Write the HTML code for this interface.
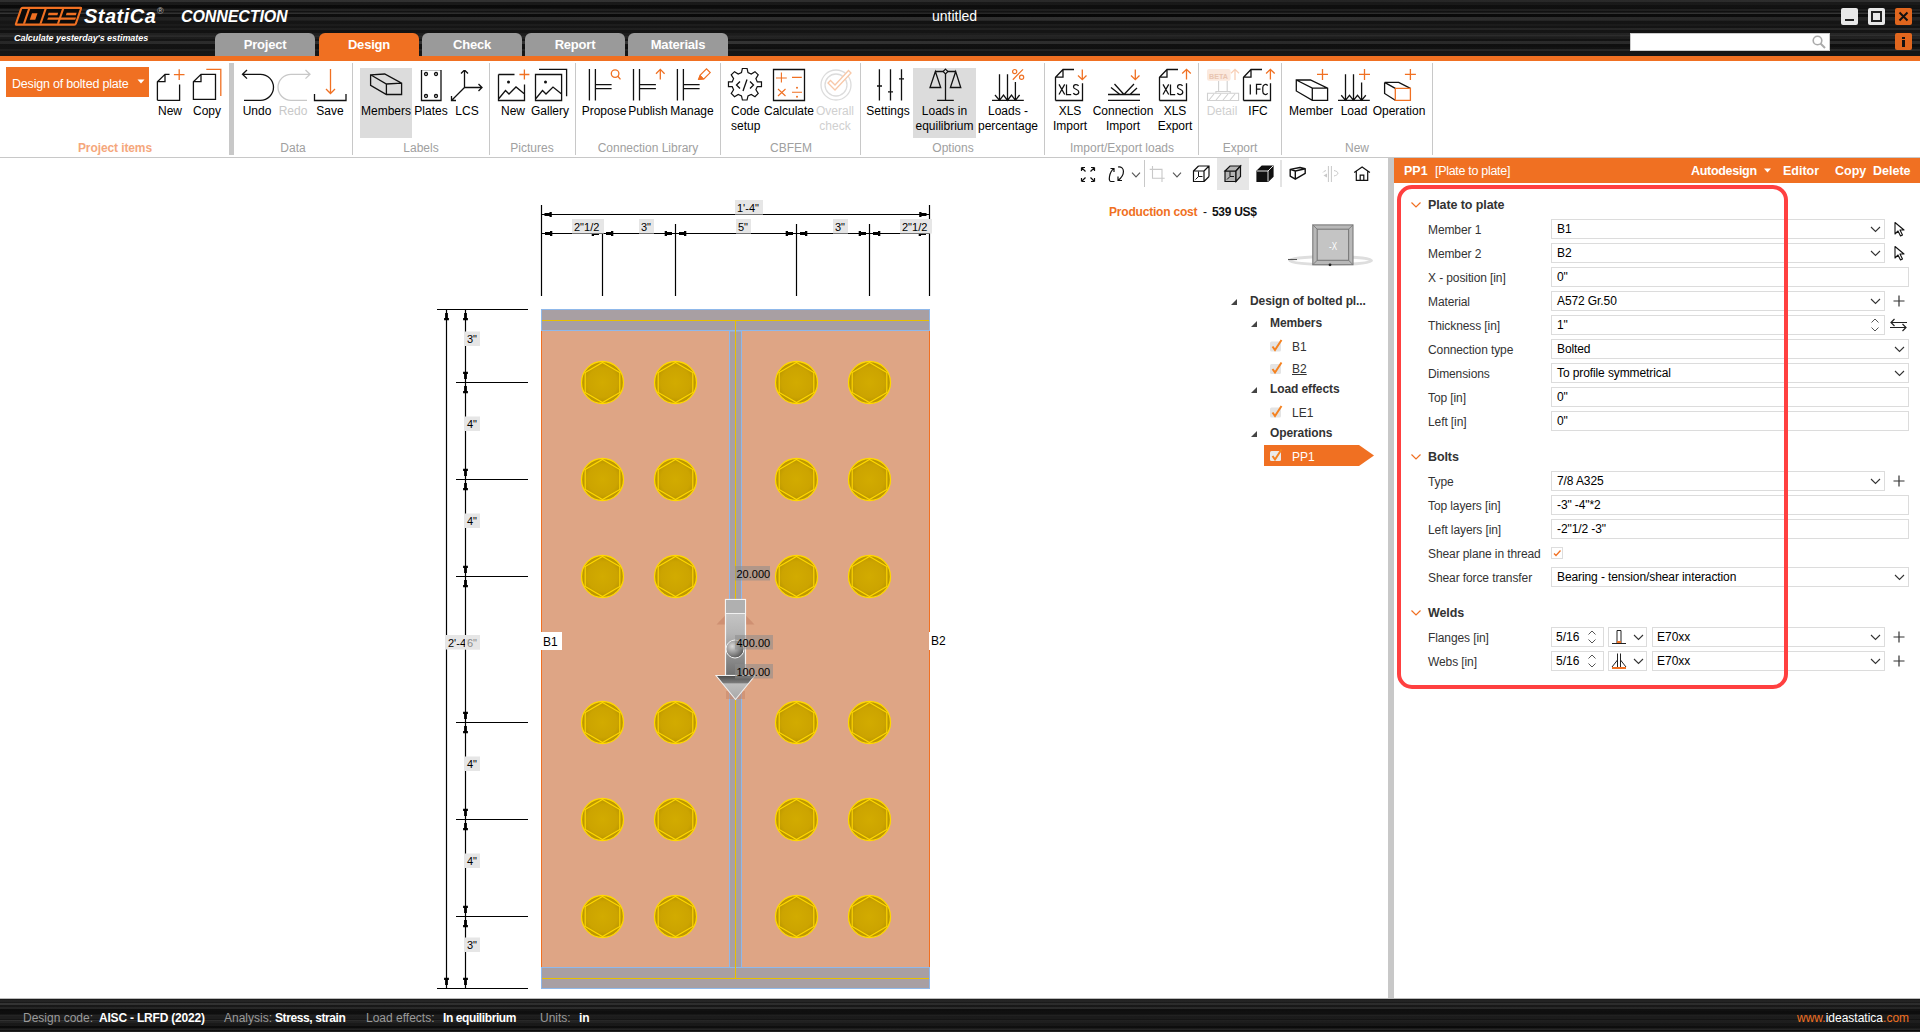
<!DOCTYPE html>
<html><head><meta charset="utf-8">
<style>
*{box-sizing:border-box;margin:0;padding:0}
html,body{width:1920px;height:1032px;overflow:hidden;background:#fff;font-family:"Liberation Sans",sans-serif;color:#000}
.a{position:absolute}
.tab{position:absolute;top:33px;height:23px;width:99px;border-radius:6px 6px 0 0;background:#9a9a9a;color:#fff;font-weight:bold;font-size:13px;text-align:center;line-height:24px;letter-spacing:-0.2px}
.tab.on{background:#f07022}
.rb{position:absolute;font-size:12px;color:#000;text-align:center;white-space:nowrap;line-height:15px}
.grp{position:absolute;top:141px;font-size:12px;color:#a0a0a0;text-align:center;white-space:nowrap}
.vs{position:absolute;top:63px;height:92px;width:1px;background:#c8c8c8}
</style></head><body>
<!-- HEADER -->
<div class="a" style="left:0;top:0;width:1920px;height:56px;overflow:hidden"><svg class="a" style="left:0;top:0" width="1920" height="56"><rect width="1920" height="56" fill="#171717"/><linearGradient id="h0"><stop offset="0.00" stop-opacity="0.58" stop-color="rgb(64,64,64)"/><stop offset="0.33" stop-opacity="0.65" stop-color="rgb(64,64,64)"/><stop offset="0.67" stop-opacity="0.31" stop-color="rgb(64,64,64)"/><stop offset="1.00" stop-opacity="0.59" stop-color="rgb(64,64,64)"/></linearGradient><rect y="0" width="1920" height="2" fill="url(#h0)"/><linearGradient id="h20"><stop offset="0.00" stop-opacity="0.53" stop-color="rgb(28,28,28)"/><stop offset="0.50" stop-opacity="0.27" stop-color="rgb(28,28,28)"/><stop offset="1.00" stop-opacity="0.61" stop-color="rgb(28,28,28)"/></linearGradient><rect y="2" width="1920" height="3" fill="url(#h20)"/><linearGradient id="h50"><stop offset="0.00" stop-opacity="0.98" stop-color="rgb(10,10,10)"/><stop offset="0.25" stop-opacity="0.97" stop-color="rgb(10,10,10)"/><stop offset="0.50" stop-opacity="0.71" stop-color="rgb(10,10,10)"/><stop offset="0.75" stop-opacity="0.67" stop-color="rgb(10,10,10)"/><stop offset="1.00" stop-opacity="0.28" stop-color="rgb(10,10,10)"/></linearGradient><rect y="5" width="1920" height="3" fill="url(#h50)"/><linearGradient id="h80"><stop offset="0.00" stop-opacity="0.18" stop-color="rgb(13,13,13)"/><stop offset="0.50" stop-opacity="0.90" stop-color="rgb(13,13,13)"/><stop offset="1.00" stop-opacity="0.66" stop-color="rgb(13,13,13)"/></linearGradient><rect y="8" width="1920" height="1" fill="url(#h80)"/><linearGradient id="h90"><stop offset="0.00" stop-opacity="0.65" stop-color="rgb(46,46,46)"/><stop offset="0.33" stop-opacity="0.32" stop-color="rgb(46,46,46)"/><stop offset="0.67" stop-opacity="0.35" stop-color="rgb(46,46,46)"/><stop offset="1.00" stop-opacity="0.40" stop-color="rgb(46,46,46)"/></linearGradient><rect y="9" width="1920" height="2" fill="url(#h90)"/><linearGradient id="h110"><stop offset="0.00" stop-opacity="0.71" stop-color="rgb(15,15,15)"/><stop offset="0.33" stop-opacity="0.50" stop-color="rgb(15,15,15)"/><stop offset="0.67" stop-opacity="0.62" stop-color="rgb(15,15,15)"/><stop offset="1.00" stop-opacity="0.94" stop-color="rgb(15,15,15)"/></linearGradient><rect y="11" width="1920" height="1" fill="url(#h110)"/><linearGradient id="h120"><stop offset="0.00" stop-opacity="0.79" stop-color="rgb(37,37,37)"/><stop offset="0.33" stop-opacity="0.59" stop-color="rgb(37,37,37)"/><stop offset="0.67" stop-opacity="0.18" stop-color="rgb(37,37,37)"/><stop offset="1.00" stop-opacity="0.63" stop-color="rgb(37,37,37)"/></linearGradient><rect y="12" width="1920" height="1" fill="url(#h120)"/><linearGradient id="h130"><stop offset="0.00" stop-opacity="0.87" stop-color="rgb(56,56,56)"/><stop offset="0.50" stop-opacity="0.48" stop-color="rgb(56,56,56)"/><stop offset="1.00" stop-opacity="0.96" stop-color="rgb(56,56,56)"/></linearGradient><rect y="13" width="1920" height="1" fill="url(#h130)"/><linearGradient id="h140"><stop offset="0.00" stop-opacity="0.33" stop-color="rgb(5,5,5)"/><stop offset="0.50" stop-opacity="0.92" stop-color="rgb(5,5,5)"/><stop offset="1.00" stop-opacity="0.55" stop-color="rgb(5,5,5)"/></linearGradient><rect y="14" width="1920" height="3" fill="url(#h140)"/><linearGradient id="h170"><stop offset="0.00" stop-opacity="0.21" stop-color="rgb(55,55,55)"/><stop offset="0.33" stop-opacity="0.69" stop-color="rgb(55,55,55)"/><stop offset="0.67" stop-opacity="0.81" stop-color="rgb(55,55,55)"/><stop offset="1.00" stop-opacity="0.38" stop-color="rgb(55,55,55)"/></linearGradient><rect y="17" width="1920" height="3" fill="url(#h170)"/><linearGradient id="h200"><stop offset="0.00" stop-opacity="0.16" stop-color="rgb(44,44,44)"/><stop offset="0.33" stop-opacity="0.50" stop-color="rgb(44,44,44)"/><stop offset="0.67" stop-opacity="0.93" stop-color="rgb(44,44,44)"/><stop offset="1.00" stop-opacity="0.26" stop-color="rgb(44,44,44)"/></linearGradient><rect y="20" width="1920" height="1" fill="url(#h200)"/><linearGradient id="h210"><stop offset="0.00" stop-opacity="0.20" stop-color="rgb(17,17,17)"/><stop offset="0.50" stop-opacity="0.83" stop-color="rgb(17,17,17)"/><stop offset="1.00" stop-opacity="0.30" stop-color="rgb(17,17,17)"/></linearGradient><rect y="21" width="1920" height="3" fill="url(#h210)"/><linearGradient id="h240"><stop offset="0.00" stop-opacity="0.58" stop-color="rgb(29,29,29)"/><stop offset="0.33" stop-opacity="0.99" stop-color="rgb(29,29,29)"/><stop offset="0.67" stop-opacity="0.80" stop-color="rgb(29,29,29)"/><stop offset="1.00" stop-opacity="0.51" stop-color="rgb(29,29,29)"/></linearGradient><rect y="24" width="1920" height="2" fill="url(#h240)"/><linearGradient id="h260"><stop offset="0.00" stop-opacity="0.51" stop-color="rgb(19,19,19)"/><stop offset="0.33" stop-opacity="0.33" stop-color="rgb(19,19,19)"/><stop offset="0.67" stop-opacity="0.38" stop-color="rgb(19,19,19)"/><stop offset="1.00" stop-opacity="0.98" stop-color="rgb(19,19,19)"/></linearGradient><rect y="26" width="1920" height="2" fill="url(#h260)"/><linearGradient id="h280"><stop offset="0.00" stop-opacity="0.33" stop-color="rgb(43,43,43)"/><stop offset="0.50" stop-opacity="0.49" stop-color="rgb(43,43,43)"/><stop offset="1.00" stop-opacity="0.88" stop-color="rgb(43,43,43)"/></linearGradient><rect y="28" width="1920" height="2" fill="url(#h280)"/><linearGradient id="h300"><stop offset="0.00" stop-opacity="0.99" stop-color="rgb(17,17,17)"/><stop offset="0.50" stop-opacity="0.33" stop-color="rgb(17,17,17)"/><stop offset="1.00" stop-opacity="0.37" stop-color="rgb(17,17,17)"/></linearGradient><rect y="30" width="1920" height="3" fill="url(#h300)"/><linearGradient id="h330"><stop offset="0.00" stop-opacity="0.48" stop-color="rgb(47,47,47)"/><stop offset="0.33" stop-opacity="0.21" stop-color="rgb(47,47,47)"/><stop offset="0.67" stop-opacity="0.33" stop-color="rgb(47,47,47)"/><stop offset="1.00" stop-opacity="0.69" stop-color="rgb(47,47,47)"/></linearGradient><rect y="33" width="1920" height="2" fill="url(#h330)"/><linearGradient id="h350"><stop offset="0.00" stop-opacity="0.68" stop-color="rgb(52,52,52)"/><stop offset="0.33" stop-opacity="0.26" stop-color="rgb(52,52,52)"/><stop offset="0.67" stop-opacity="0.65" stop-color="rgb(52,52,52)"/><stop offset="1.00" stop-opacity="0.86" stop-color="rgb(52,52,52)"/></linearGradient><rect y="35" width="1920" height="1" fill="url(#h350)"/><linearGradient id="h360"><stop offset="0.00" stop-opacity="0.68" stop-color="rgb(54,54,54)"/><stop offset="0.50" stop-opacity="0.41" stop-color="rgb(54,54,54)"/><stop offset="1.00" stop-opacity="0.34" stop-color="rgb(54,54,54)"/></linearGradient><rect y="36" width="1920" height="1" fill="url(#h360)"/><linearGradient id="h370"><stop offset="0.00" stop-opacity="0.31" stop-color="rgb(36,36,36)"/><stop offset="0.25" stop-opacity="0.78" stop-color="rgb(36,36,36)"/><stop offset="0.50" stop-opacity="0.95" stop-color="rgb(36,36,36)"/><stop offset="0.75" stop-opacity="0.32" stop-color="rgb(36,36,36)"/><stop offset="1.00" stop-opacity="0.96" stop-color="rgb(36,36,36)"/></linearGradient><rect y="37" width="1920" height="2" fill="url(#h370)"/><linearGradient id="h390"><stop offset="0.00" stop-opacity="0.19" stop-color="rgb(15,15,15)"/><stop offset="0.33" stop-opacity="0.24" stop-color="rgb(15,15,15)"/><stop offset="0.67" stop-opacity="0.59" stop-color="rgb(15,15,15)"/><stop offset="1.00" stop-opacity="0.37" stop-color="rgb(15,15,15)"/></linearGradient><rect y="39" width="1920" height="2" fill="url(#h390)"/><linearGradient id="h410"><stop offset="0.00" stop-opacity="0.51" stop-color="rgb(55,55,55)"/><stop offset="0.33" stop-opacity="0.92" stop-color="rgb(55,55,55)"/><stop offset="0.67" stop-opacity="0.57" stop-color="rgb(55,55,55)"/><stop offset="1.00" stop-opacity="0.59" stop-color="rgb(55,55,55)"/></linearGradient><rect y="41" width="1920" height="3" fill="url(#h410)"/><linearGradient id="h440"><stop offset="0.00" stop-opacity="0.34" stop-color="rgb(13,13,13)"/><stop offset="0.50" stop-opacity="0.63" stop-color="rgb(13,13,13)"/><stop offset="1.00" stop-opacity="0.87" stop-color="rgb(13,13,13)"/></linearGradient><rect y="44" width="1920" height="3" fill="url(#h440)"/><linearGradient id="h470"><stop offset="0.00" stop-opacity="0.33" stop-color="rgb(14,14,14)"/><stop offset="0.33" stop-opacity="0.93" stop-color="rgb(14,14,14)"/><stop offset="0.67" stop-opacity="0.79" stop-color="rgb(14,14,14)"/><stop offset="1.00" stop-opacity="0.21" stop-color="rgb(14,14,14)"/></linearGradient><rect y="47" width="1920" height="2" fill="url(#h470)"/><linearGradient id="h490"><stop offset="0.00" stop-opacity="0.20" stop-color="rgb(62,62,62)"/><stop offset="0.50" stop-opacity="0.30" stop-color="rgb(62,62,62)"/><stop offset="1.00" stop-opacity="0.46" stop-color="rgb(62,62,62)"/></linearGradient><rect y="49" width="1920" height="2" fill="url(#h490)"/><linearGradient id="h510"><stop offset="0.00" stop-opacity="0.46" stop-color="rgb(21,21,21)"/><stop offset="0.50" stop-opacity="0.91" stop-color="rgb(21,21,21)"/><stop offset="1.00" stop-opacity="0.98" stop-color="rgb(21,21,21)"/></linearGradient><rect y="51" width="1920" height="2" fill="url(#h510)"/><linearGradient id="h530"><stop offset="0.00" stop-opacity="0.18" stop-color="rgb(22,22,22)"/><stop offset="0.25" stop-opacity="0.17" stop-color="rgb(22,22,22)"/><stop offset="0.50" stop-opacity="0.92" stop-color="rgb(22,22,22)"/><stop offset="0.75" stop-opacity="0.75" stop-color="rgb(22,22,22)"/><stop offset="1.00" stop-opacity="0.97" stop-color="rgb(22,22,22)"/></linearGradient><rect y="53" width="1920" height="3" fill="url(#h530)"/></svg></div>
<div class="a" style="left:0;top:56px;width:1920px;height:5px;background:#f07022"></div>
<!-- logo -->
<svg class="a" style="left:12px;top:5px" width="75" height="23">
 <g transform="translate(2.2,20.8) skewX(-19)">
  <rect x="0" y="-19" width="62" height="19" rx="2" fill="#f07022"/>
  <rect x="2.2" y="-16.8" width="57.6" height="14.6" fill="#0a0a0a"/>
  <rect x="8" y="-17" width="2.2" height="15" fill="#f07022"/>
  <rect x="24.5" y="-17" width="2.2" height="15" fill="#f07022"/>
  <rect x="42" y="-17" width="2.2" height="15" fill="#f07022"/>
  <rect x="13.5" y="-12.5" width="5.5" height="6.5" fill="#f07022"/>
  <rect x="30" y="-13" width="9.5" height="2.4" fill="#f07022"/>
  <rect x="31" y="-8.2" width="28" height="2.2" fill="#f07022"/>
  <rect x="48" y="-13" width="10" height="2.4" fill="#f07022"/>
 </g>
</svg>
<div class="a" style="left:84px;top:4px;color:#fff;font-weight:bold;font-style:italic;font-size:20px;line-height:24px;letter-spacing:0.5px">StatiCa</div>
<div class="a" style="left:157px;top:6px;color:#bbb;font-size:9px">&reg;</div>
<div class="a" style="left:181px;top:7px;color:#fff;font-weight:bold;font-style:italic;font-size:16px;line-height:20px;letter-spacing:-0.1px">CONNECTION</div>
<div class="a" style="left:14px;top:33px;color:#fff;font-weight:bold;font-style:italic;font-size:9px;line-height:11px;letter-spacing:-0.05px">Calculate yesterday's estimates</div>
<div class="a" style="left:932px;top:8px;color:#fff;font-size:14px;line-height:17px">untitled</div>
<!-- window buttons -->
<div class="a" style="left:1841px;top:8px;width:17px;height:17px;background:#e8e8e8;border-radius:2px"></div>
<div class="a" style="left:1845px;top:19px;width:9px;height:2px;background:#222"></div>
<div class="a" style="left:1868px;top:8px;width:17px;height:17px;background:#e8e8e8;border-radius:2px"></div>
<div class="a" style="left:1871px;top:11px;width:11px;height:11px;border:2px solid #222"></div>
<div class="a" style="left:1895px;top:8px;width:17px;height:17px;background:#e0661e;border-radius:2px"></div>
<svg class="a" style="left:1895px;top:8px" width="17" height="17"><path d="M4.5 4.5L12.5 12.5M12.5 4.5L4.5 12.5" stroke="#111" stroke-width="2"/></svg>
<div class="a" style="left:1630px;top:33px;width:200px;height:18px;background:#fff;border:1px solid #ccc"></div>
<svg class="a" style="left:1811px;top:34px" width="16" height="16"><circle cx="6.5" cy="6.5" r="4.3" fill="none" stroke="#aaa" stroke-width="1.6"/><path d="M9.5 9.5L14 14" stroke="#aaa" stroke-width="2"/></svg>
<div class="a" style="left:1895px;top:33px;width:17px;height:17px;background:#e0661e;border-radius:2px"></div>
<div class="a" style="left:1902px;top:37px;width:3px;height:2px;background:#111"></div>
<div class="a" style="left:1902px;top:40px;width:3px;height:7px;background:#111"></div>
<!-- tabs -->
<div class="tab" style="left:215px;width:100px">Project</div>
<div class="tab on" style="left:319px;width:100px">Design</div>
<div class="tab" style="left:422px;width:100px">Check</div>
<div class="tab" style="left:525px;width:100px">Report</div>
<div class="tab" style="left:628px;width:100px">Materials</div>
<!-- RIBBON -->
<div class="a" style="left:0;top:157px;width:1920px;height:1px;background:#c8c8c8"></div>
<!-- ribbon: project items -->
<div class="a" style="left:6px;top:67px;width:143px;height:30px;background:#f07022"></div>
<div class="a" style="left:12px;top:76px;color:#fff;font-size:12.5px;line-height:16px;white-space:nowrap;letter-spacing:-0.2px">Design of bolted plate</div>
<svg class="a" style="left:137px;top:79px" width="8" height="5"><path d="M0.5 0.5H7.5L4 4.5Z" fill="#fff"/></svg>
<svg class="a" style="left:155px;top:68px" width="70" height="34" fill="none" stroke="#111" stroke-width="1.3">
 <path d="M2.4 32.3V13.7L10 6.3H14.5M2.4 13.7H10V6.3M24.6 16.4V32.3H2.4"/>
 <path d="M18.9 6.6H29.5M24.2 1.3V11.9" stroke="#f07022"/>
 <path d="M38.4 31.4V13.7L46 6.3H60.5V31.4ZM38.4 13.7H46V6.3"/>
 <path d="M51.3 1.3H65.8V27.9" stroke="#f07022"/>
</svg>
<div class="rb" style="left:150px;top:104px;width:40px">New</div>
<div class="rb" style="left:187px;top:104px;width:40px">Copy</div>
<div class="grp" style="left:60px;width:110px;color:#f5a77c;font-weight:bold;letter-spacing:-0.1px">Project items</div>
<div class="a" style="left:229px;top:63px;width:5px;height:92px;background:#c8c8c8"></div>
<!-- data -->
<svg class="a" style="left:240px;top:68px" width="120" height="36" fill="none" stroke="#111" stroke-width="1.3">
 <path d="M2.5 6.3H20.5A13 13 0 0 1 20.5 32.3H4M7 2L2.5 6.3L7 10.6"/>
 <path d="M70 6.3H51A13 13 0 0 0 51 32.3H67M65.5 2L70 6.3L65.5 10.6" stroke="#c8c8c8"/>
 <path d="M90.5 1V25.5M86 21L90.5 25.5L95 21" stroke="#f07022"/>
 <path d="M74.5 26V32.5H106V26"/>
</svg>
<div class="rb" style="left:237px;top:104px;width:40px">Undo</div>
<div class="rb" style="left:273px;top:104px;width:40px;color:#c8c8c8">Redo</div>
<div class="rb" style="left:310px;top:104px;width:40px">Save</div>
<div class="grp" style="left:253px;width:80px">Data</div>
<div class="vs" style="left:352px"></div>
<!-- labels -->
<div class="a" style="left:360px;top:68px;width:52px;height:70px;background:#dcdcdc"></div>
<svg class="a" style="left:368px;top:70px" width="130" height="36" fill="none" stroke="#111" stroke-width="1.3">
 <path d="M2.6 4.8L16.7 4L33.6 13.2V24.5H18.4L2.6 15.3ZM2.6 4.8L18.4 14L33.6 13.2M18.4 14V24.5"/>
 <path d="M53.5 -0.5H73V30.5H53.5Z"/><circle cx="58" cy="4" r="1.5"/><circle cx="68" cy="4" r="1.5"/><circle cx="58" cy="26" r="1.5"/><circle cx="68" cy="26" r="1.5"/>
 <path d="M96.5 0V17.5M93 3.5L96.5 0L100 3.5M96.5 17.5H114M110.5 14L114 17.5L110.5 21M96.5 17.5L83.5 30.5M83.5 26V30.5H88"/>
</svg>
<div class="rb" style="left:360px;top:104px;width:52px">Members</div>
<div class="rb" style="left:411px;top:104px;width:40px">Plates</div>
<div class="rb" style="left:447px;top:104px;width:40px">LCS</div>
<div class="grp" style="left:381px;width:80px">Labels</div>
<div class="vs" style="left:489px"></div>
<!-- pictures -->
<svg class="a" style="left:497px;top:68px" width="75" height="36" fill="none" stroke="#111" stroke-width="1.3">
 <path d="M1.5 6.5H17.5M27.5 16.4V32.5H1.5V6.5M1.5 31L8.5 22.5L12 26L19 19L27.5 26"/><circle cx="11.5" cy="14" r="1.5" fill="#111" stroke="none"/>
 <path d="M22.4 6.5H32.4M27.4 1.5V11.5" stroke="#f07022"/>
 <path d="M38.5 6.5H64.6V32.5H38.5ZM38.5 31L45.5 22.5L49 26L56 19L64.6 26M42 1.4H69.6V28.3"/><circle cx="48.5" cy="14" r="1.5" fill="#111" stroke="none"/>
</svg>
<div class="rb" style="left:493px;top:104px;width:40px">New</div>
<div class="rb" style="left:528px;top:104px;width:44px">Gallery</div>
<div class="grp" style="left:492px;width:80px">Pictures</div>
<div class="vs" style="left:575px"></div>
<!-- connection library -->
<svg class="a" style="left:586px;top:68px" width="130" height="36" fill="none" stroke="#111" stroke-width="1.3">
 <path d="M3.4 1V32.5M9.4 1V32.5M9.4 16.6H25.6M9.4 20.6H25.6"/>
 <circle cx="29.1" cy="5.6" r="3.8" stroke="#f07022"/><path d="M31.8 8.3L34.5 11.4" stroke="#f07022"/>
 <path d="M47.5 1V32.5M53.5 1V32.5M53.5 16.6H69.9M53.5 20.6H69.9"/>
 <path d="M74.3 1.4V11.6M70 5.7L74.3 1.4L78.6 5.7" stroke="#f07022"/>
 <path d="M91.4 1V32.5M97.4 1V32.5M97.4 16.6H113.6M97.4 20.6H113.6"/>
 <path d="M112.6 11.4L114.2 7.2L120.5 0.9L124.2 4.6L117.9 10.9Z" stroke="#f07022" stroke-width="1.2"/><path d="M112.6 11.4L114.2 7.2L117.9 10.9Z" fill="#f07022" stroke="#f07022" stroke-width="0.8"/>
</svg>
<div class="rb" style="left:579px;top:104px;width:50px">Propose</div>
<div class="rb" style="left:623px;top:104px;width:50px">Publish</div>
<div class="rb" style="left:667px;top:104px;width:50px">Manage</div>
<div class="grp" style="left:578px;width:140px">Connection Library</div>
<div class="vs" style="left:720px"></div>
<!-- cbfem -->
<svg class="a" style="left:727px;top:68px" width="130" height="36" fill="none" stroke="#111" stroke-width="1.3">
 <path d="M15.5 1.5H20.5L21.5 6L25 7.5L29 5L32.5 8.5L30 12.5L31.5 16H36V21H31.5L30 24.5L32.5 28.5L29 32L25 29.5L21.5 31L20.5 35.5H15.5L14.5 31L11 29.5L7 32L3.5 28.5L6 24.5L4.5 21H0.5V16H4.5L6 12.5L3.5 8.5L7 5L11 7.5L14.5 6Z" transform="translate(1,-1) scale(0.93)"/>
 <path d="M13 13.5L9.5 17L13 20.5M23 13.5L26.5 17L23 20.5M20 11.5L16 23"/>
 <path d="M46.5 1.5H77.5V32.5H46.5Z"/>
 <path d="M49 10H59.8M54.4 4.4V14.6M65 9.4H74.8M51 21L58.5 28M58.5 21L51 28M65 24.3H75" stroke="#f07022" stroke-width="1.1"/><circle cx="70" cy="19.8" r="1" fill="#f07022" stroke="none"/><circle cx="70" cy="28.8" r="1" fill="#f07022" stroke="none"/>
 <circle cx="109" cy="17" r="15" stroke="#dcdcdc" stroke-width="1.3"/><circle cx="109" cy="17" r="11" stroke="#dcdcdc"/>
 <path d="M101 15L108 22L124 5L121.5 2.5L108 17L103.5 12.5Z" stroke="#f8c8a8" fill="#fff"/>
</svg>
<div class="rb" style="left:731px;top:104px;width:40px;text-align:left">Code<br>setup</div>
<div class="rb" style="left:762px;top:104px;width:54px">Calculate</div>
<div class="rb" style="left:810px;top:104px;width:50px;color:#d0d0d0">Overall<br>check</div>
<div class="grp" style="left:751px;width:80px">CBFEM</div>
<div class="vs" style="left:860px"></div>
<!-- options -->
<div class="a" style="left:913px;top:68px;width:63px;height:70px;background:#dcdcdc"></div>
<svg class="a" style="left:874px;top:68px" width="155" height="36" fill="none" stroke="#111" stroke-width="1.3">
 <path d="M5.4 1.3V32.5M16.5 1.3V32.5M27.5 1.3V32.5M3 18H8M14 23.9H19M25 10.9H30"/>
 <path d="M71.5 3.5V32.3M61.4 3.5H81.7M61.4 3.5L56 19.5H66.7ZM81.7 3.5L76.4 19.5H86.75ZM63.1 32.3H79.8"/>
 <path d="M71.5 1.1L73.9 3.5L71.5 5.9L69.1 3.5Z" fill="#dcdcdc" stroke-width="1.1"/>
 <path d="M125.5 6.2V32.3M133.5 6.2V32.3M141.4 14.1V32.3M118 32.3H149.8M121 27L125.5 32.3L129.5 27L133.5 32.3L137.5 27L141.4 32.3L145.6 27" stroke-linejoin="miter"/>
 <circle cx="140.7" cy="3.6" r="2.1" stroke="#f07022" stroke-width="1.2"/><circle cx="147.6" cy="9.3" r="2.1" stroke="#f07022" stroke-width="1.2"/><path d="M149 1.3L138.8 11.75" stroke="#f07022" stroke-width="1.2"/>
</svg>
<div class="rb" style="left:863px;top:104px;width:50px">Settings</div>
<div class="rb" style="left:913px;top:104px;width:63px">Loads in<br>equilibrium</div>
<div class="rb" style="left:976px;top:104px;width:64px">Loads -<br>percentage</div>
<div class="grp" style="left:913px;width:80px">Options</div>
<div class="vs" style="left:1044px"></div>
<!-- import/export -->
<svg class="a" style="left:1053px;top:68px" width="145" height="36" fill="none" stroke="#111" stroke-width="1.3">
 <path d="M2.5 32.5V9.2L10 1.5H21M2.5 9.2H10V1.5M29.5 15.2V32.5H2.5"/>
 <path d="M6 16.4L11.7 26.5M11.7 16.4L6 26.5M13.5 16.4V26.5H18.2M25.5 18C24.8 16.2 20.5 15.8 20.5 18.9C20.5 21.6 25.8 21 25.8 24C25.8 27.2 21.2 27.2 20.4 25" stroke-width="1.25"/>
 <path d="M29.3 1.4V11.6M25 7.5L29.3 11.6L33.5 7.5" stroke="#f07022"/>
 <path d="M55 26.5H87M55 32.3H87M58 19.4L67 26.5M61.5 16L71 26.5M71 26.5L81 16M77 26.5L84 20"/>
 <path d="M82.3 1.4V11.6M78 7.5L82.3 11.6L86.5 7.5" stroke="#f07022"/>
 <path d="M106.5 32.5V9.2L114 1.5H125M106.5 9.2H114V1.5M133.5 15.2V32.5H106.5"/>
 <path d="M110 16.4L115.7 26.5M115.7 16.4L110 26.5M117.5 16.4V26.5H122.2M129.5 18C128.8 16.2 124.5 15.8 124.5 18.9C124.5 21.6 129.8 21 129.8 24C129.8 27.2 125.2 27.2 124.4 25" stroke-width="1.25"/>
 <path d="M133.5 11.6V1.4M129.2 5.5L133.5 1.4L137.8 5.5" stroke="#f07022"/>
</svg>
<div class="rb" style="left:1045px;top:104px;width:50px">XLS<br>Import</div>
<div class="rb" style="left:1091px;top:104px;width:64px">Connection<br>Import</div>
<div class="rb" style="left:1150px;top:104px;width:50px">XLS<br>Export</div>
<div class="grp" style="left:1062px;width:120px">Import/Export loads</div>
<div class="vs" style="left:1198px"></div>
<!-- export -->
<svg class="a" style="left:1205px;top:68px" width="75" height="36" fill="none" stroke="#111" stroke-width="1.3">
 <rect x="2" y="1" width="23.6" height="11.8" rx="2" fill="#fbe9de" stroke="none"/>
 <text x="4" y="10.5" font-family="Liberation Sans" font-weight="bold" font-size="7.5" fill="#e8c4b0" stroke="none" textLength="19" lengthAdjust="spacingAndGlyphs">BETA</text>
 <path d="M13.6 13V23.5M22.2 13V23.5M10.9 25.3V23.5H25.2V25.3M2.5 25.3H33.6V32.5H2.5ZM4 32L9 26M11 32L16 26M18 32L23 26M25 32L30 26" stroke="#d0d0d0" stroke-width="1.1"/>
 <path d="M30 12V1.4M26 5.3L30 1.4L34 5.3" stroke="#f8d0b8"/>
 <path d="M38.5 32.5V9.2L46 1.5H57M38.5 9.2H46V1.5M65.5 15.2V32.5H38.5"/>
 <path d="M45.3 16.4V26.5M51.5 26.5V16.4H56.5M51.5 21.2H55.5M62.6 17.6C61.5 15.8 57.8 16 57.8 19.5V23.4C57.8 27 61.5 27.2 62.6 25.3" stroke-width="1.25"/>
 <path d="M65.4 11.6V1.4M61.1 5.5L65.4 1.4L69.7 5.5" stroke="#f07022"/>
</svg>
<div class="rb" style="left:1202px;top:104px;width:40px;color:#d0d0d0">Detail</div>
<div class="rb" style="left:1238px;top:104px;width:40px">IFC</div>
<div class="grp" style="left:1200px;width:80px">Export</div>
<div class="vs" style="left:1281px"></div>
<!-- new -->
<svg class="a" style="left:1294px;top:68px" width="130" height="36" fill="none" stroke="#111" stroke-width="1.3">
 <path d="M2.3 12H16.4L33.6 20.2V32.3H18.3L2.3 23ZM2.3 12L18.3 20.2H33.6M18.3 20.2V32.3"/>
 <path d="M23 6.4H34M28.5 0.9V11.9" stroke="#f07022"/>
 <path d="M51.5 6.2V32.3M59.5 6.2V32.3M67.6 14.4V32.3M44 32.3H75.8M47.25 27.25L51.5 32.3L55.5 27.25L59.5 32.3L63.5 27.25L67.6 32.3L71.8 27.25" stroke-linejoin="miter"/>
 <path d="M65 6.4H76M70.5 0.9V11.9" stroke="#f07022"/>
 <path d="M90.6 14.4H104.7L116.4 20.4M90.6 14.4L101.3 20.4M90.6 14.4V25.5L101.3 32.3"/>
 <path d="M101.3 20.4H116.4V32.3H101.3Z" stroke="#f07022"/>
 <path d="M110.9 6.4H121.9M116.4 0.9V11.9" stroke="#f07022"/>
</svg>
<div class="rb" style="left:1286px;top:104px;width:50px">Member</div>
<div class="rb" style="left:1334px;top:104px;width:40px">Load</div>
<div class="rb" style="left:1371px;top:104px;width:56px">Operation</div>
<div class="grp" style="left:1317px;width:80px">New</div>
<div class="vs" style="left:1432px"></div>
<svg class="a" style="left:0;top:0" width="1388" height="998"><line x1="541.5" y1="205" x2="541.5" y2="296" stroke="#000" stroke-width="1.2"/><line x1="602.5" y1="224" x2="602.5" y2="296" stroke="#000" stroke-width="1.2"/><line x1="675.5" y1="224" x2="675.5" y2="296" stroke="#000" stroke-width="1.2"/><line x1="796.5" y1="224" x2="796.5" y2="296" stroke="#000" stroke-width="1.2"/><line x1="869.5" y1="224" x2="869.5" y2="296" stroke="#000" stroke-width="1.2"/><line x1="929.5" y1="205" x2="929.5" y2="296" stroke="#000" stroke-width="1.2"/><line x1="541.5" y1="214.5" x2="929.5" y2="214.5" stroke="#000" stroke-width="1.2"/><path d="M544.5 213.1 H549.5 V212.1 H551.8 V216.9 H549.5 V215.9 H544.5 Z" fill="#000"/><path d="M926.5 213.1 H921.5 V212.1 H919.2 V216.9 H921.5 V215.9 H926.5 Z" fill="#000"/><line x1="541.5" y1="233.5" x2="929.5" y2="233.5" stroke="#000" stroke-width="1.2"/><path d="M545.0 232.1 H550.0 V231.1 H552.3 V235.9 H550.0 V234.9 H545.0 Z" fill="#000"/><path d="M599.0 232.1 H594.0 V231.1 H591.7 V235.9 H594.0 V234.9 H599.0 Z" fill="#000"/><path d="M606.0 232.1 H611.0 V231.1 H613.3 V235.9 H611.0 V234.9 H606.0 Z" fill="#000"/><path d="M672.0 232.1 H667.0 V231.1 H664.7 V235.9 H667.0 V234.9 H672.0 Z" fill="#000"/><path d="M679.0 232.1 H684.0 V231.1 H686.3 V235.9 H684.0 V234.9 H679.0 Z" fill="#000"/><path d="M793.0 232.1 H788.0 V231.1 H785.7 V235.9 H788.0 V234.9 H793.0 Z" fill="#000"/><path d="M800.0 232.1 H805.0 V231.1 H807.3 V235.9 H805.0 V234.9 H800.0 Z" fill="#000"/><path d="M866.0 232.1 H861.0 V231.1 H858.7 V235.9 H861.0 V234.9 H866.0 Z" fill="#000"/><path d="M873.0 232.1 H878.0 V231.1 H880.3 V235.9 H878.0 V234.9 H873.0 Z" fill="#000"/><path d="M926.0 232.1 H921.0 V231.1 H918.7 V235.9 H921.0 V234.9 H926.0 Z" fill="#000"/><rect x="735" y="200.0" width="28" height="14.5" fill="#e6e6e6"/><text x="737" y="211.5" font-family="Liberation Sans" font-size="11" fill="#000">1'-4"</text><rect x="572" y="219.0" width="32" height="14.5" fill="#e6e6e6"/><text x="574" y="230.5" font-family="Liberation Sans" font-size="11" fill="#000">2"1/2</text><rect x="639" y="219.0" width="15" height="14.5" fill="#e6e6e6"/><text x="641" y="230.5" font-family="Liberation Sans" font-size="11" fill="#000">3"</text><rect x="736" y="219.0" width="15" height="14.5" fill="#e6e6e6"/><text x="738" y="230.5" font-family="Liberation Sans" font-size="11" fill="#000">5"</text><rect x="833" y="219.0" width="15" height="14.5" fill="#e6e6e6"/><text x="835" y="230.5" font-family="Liberation Sans" font-size="11" fill="#000">3"</text><rect x="900" y="219.0" width="32" height="14.5" fill="#e6e6e6"/><text x="902" y="230.5" font-family="Liberation Sans" font-size="11" fill="#000">2"1/2</text><line x1="437" y1="309.5" x2="528" y2="309.5" stroke="#000" stroke-width="1.2"/><line x1="456" y1="382.5" x2="528" y2="382.5" stroke="#000" stroke-width="1.2"/><line x1="456" y1="479.5" x2="528" y2="479.5" stroke="#000" stroke-width="1.2"/><line x1="456" y1="576.5" x2="528" y2="576.5" stroke="#000" stroke-width="1.2"/><line x1="456" y1="722.5" x2="528" y2="722.5" stroke="#000" stroke-width="1.2"/><line x1="456" y1="819.5" x2="528" y2="819.5" stroke="#000" stroke-width="1.2"/><line x1="456" y1="916.5" x2="528" y2="916.5" stroke="#000" stroke-width="1.2"/><line x1="437" y1="988.5" x2="528" y2="988.5" stroke="#000" stroke-width="1.2"/><line x1="446.5" y1="309.5" x2="446.5" y2="988.5" stroke="#000" stroke-width="1.2"/><path d="M445.1 313.0 V318.0 H444.1 V320.3 H448.9 V318.0 H447.9 V313.0 Z" fill="#000"/><path d="M445.1 985.0 V980.0 H444.1 V977.7 H448.9 V980.0 H447.9 V985.0 Z" fill="#000"/><line x1="465.5" y1="309.5" x2="465.5" y2="988.5" stroke="#000" stroke-width="1.2"/><path d="M464.1 313.0 V318.0 H463.1 V320.3 H467.9 V318.0 H466.9 V313.0 Z" fill="#000"/><path d="M464.1 379.0 V374.0 H463.1 V371.7 H467.9 V374.0 H466.9 V379.0 Z" fill="#000"/><path d="M464.1 386.0 V391.0 H463.1 V393.3 H467.9 V391.0 H466.9 V386.0 Z" fill="#000"/><path d="M464.1 476.0 V471.0 H463.1 V468.7 H467.9 V471.0 H466.9 V476.0 Z" fill="#000"/><path d="M464.1 483.0 V488.0 H463.1 V490.3 H467.9 V488.0 H466.9 V483.0 Z" fill="#000"/><path d="M464.1 573.0 V568.0 H463.1 V565.7 H467.9 V568.0 H466.9 V573.0 Z" fill="#000"/><path d="M464.1 580.0 V585.0 H463.1 V587.3 H467.9 V585.0 H466.9 V580.0 Z" fill="#000"/><path d="M464.1 719.0 V714.0 H463.1 V711.7 H467.9 V714.0 H466.9 V719.0 Z" fill="#000"/><path d="M464.1 726.0 V731.0 H463.1 V733.3 H467.9 V731.0 H466.9 V726.0 Z" fill="#000"/><path d="M464.1 816.0 V811.0 H463.1 V808.7 H467.9 V811.0 H466.9 V816.0 Z" fill="#000"/><path d="M464.1 823.0 V828.0 H463.1 V830.3 H467.9 V828.0 H466.9 V823.0 Z" fill="#000"/><path d="M464.1 913.0 V908.0 H463.1 V905.7 H467.9 V908.0 H466.9 V913.0 Z" fill="#000"/><path d="M464.1 920.0 V925.0 H463.1 V927.3 H467.9 V925.0 H466.9 V920.0 Z" fill="#000"/><path d="M464.1 985.0 V980.0 H463.1 V977.7 H467.9 V980.0 H466.9 V985.0 Z" fill="#000"/><rect x="465" y="331.5" width="15" height="14.5" fill="#e6e6e6"/><text x="467" y="343" font-family="Liberation Sans" font-size="11" fill="#000">3"</text><rect x="465" y="416.5" width="15" height="14.5" fill="#e6e6e6"/><text x="467" y="428" font-family="Liberation Sans" font-size="11" fill="#000">4"</text><rect x="465" y="513.5" width="15" height="14.5" fill="#e6e6e6"/><text x="467" y="525" font-family="Liberation Sans" font-size="11" fill="#000">4"</text><rect x="465" y="756.5" width="15" height="14.5" fill="#e6e6e6"/><text x="467" y="768" font-family="Liberation Sans" font-size="11" fill="#000">4"</text><rect x="465" y="853.5" width="15" height="14.5" fill="#e6e6e6"/><text x="467" y="865" font-family="Liberation Sans" font-size="11" fill="#000">4"</text><rect x="465" y="937.5" width="15" height="14.5" fill="#e6e6e6"/><text x="467" y="949" font-family="Liberation Sans" font-size="11" fill="#000">3"</text><rect x="446" y="635.0" width="34" height="14.5" fill="#e6e6e6"/><text x="448" y="646.5" font-family="Liberation Sans" font-size="11" fill="#000">2'-4"</text><rect x="465" y="635" width="15" height="14.5" fill="#e6e6e6" opacity="0.9"/><text x="467" y="646.5" font-family="Liberation Sans" font-size="11" fill="#888">6"</text><rect x="541" y="331" width="389" height="637" fill="#dea585"/><line x1="541.5" y1="331" x2="541.5" y2="968" stroke="#f07022" stroke-width="1"/><line x1="929.5" y1="331" x2="929.5" y2="968" stroke="#f07022" stroke-width="1"/><rect x="729.5" y="331" width="12" height="637" fill="#a89fa3" stroke="#8fb8ea" stroke-width="1"/><line x1="735.5" y1="320.5" x2="735.5" y2="978.5" stroke="#e8c000" stroke-width="1"/><rect x="541.5" y="309.5" width="388" height="21" fill="#a89fa3" stroke="#8fb8ea" stroke-width="1"/><line x1="542" y1="320.5" x2="929" y2="320.5" stroke="#e8c000" stroke-width="1.2"/><rect x="541.5" y="967.5" width="388" height="21" fill="#a89fa3" stroke="#8fb8ea" stroke-width="1"/><line x1="542" y1="978.5" x2="929" y2="978.5" stroke="#e8c000" stroke-width="1.2"/><line x1="735.5" y1="320.5" x2="735.5" y2="331" stroke="#e8c000" stroke-width="1"/><line x1="735.5" y1="967" x2="735.5" y2="978.5" stroke="#e8c000" stroke-width="1"/><defs><radialGradient id="bg" cx="50%" cy="50%" r="50%"><stop offset="0" stop-color="#d2ab00"/><stop offset="0.7" stop-color="#cca400"/><stop offset="1" stop-color="#b89400"/></radialGradient></defs><circle cx="602.5" cy="382.5" r="21" fill="url(#bg)" stroke="#ffd800" stroke-width="1.3"/><polygon points="602.5,362.5 619.8,372.5 619.8,392.5 602.5,402.5 585.2,392.5 585.2,372.5" fill="none" stroke="#ffd800" stroke-width="1.1"/><circle cx="675.5" cy="382.5" r="21" fill="url(#bg)" stroke="#ffd800" stroke-width="1.3"/><polygon points="675.5,362.5 692.8,372.5 692.8,392.5 675.5,402.5 658.2,392.5 658.2,372.5" fill="none" stroke="#ffd800" stroke-width="1.1"/><circle cx="796.5" cy="382.5" r="21" fill="url(#bg)" stroke="#ffd800" stroke-width="1.3"/><polygon points="796.5,362.5 813.8,372.5 813.8,392.5 796.5,402.5 779.2,392.5 779.2,372.5" fill="none" stroke="#ffd800" stroke-width="1.1"/><circle cx="869.5" cy="382.5" r="21" fill="url(#bg)" stroke="#ffd800" stroke-width="1.3"/><polygon points="869.5,362.5 886.8,372.5 886.8,392.5 869.5,402.5 852.2,392.5 852.2,372.5" fill="none" stroke="#ffd800" stroke-width="1.1"/><circle cx="602.5" cy="479.5" r="21" fill="url(#bg)" stroke="#ffd800" stroke-width="1.3"/><polygon points="602.5,459.5 619.8,469.5 619.8,489.5 602.5,499.5 585.2,489.5 585.2,469.5" fill="none" stroke="#ffd800" stroke-width="1.1"/><circle cx="675.5" cy="479.5" r="21" fill="url(#bg)" stroke="#ffd800" stroke-width="1.3"/><polygon points="675.5,459.5 692.8,469.5 692.8,489.5 675.5,499.5 658.2,489.5 658.2,469.5" fill="none" stroke="#ffd800" stroke-width="1.1"/><circle cx="796.5" cy="479.5" r="21" fill="url(#bg)" stroke="#ffd800" stroke-width="1.3"/><polygon points="796.5,459.5 813.8,469.5 813.8,489.5 796.5,499.5 779.2,489.5 779.2,469.5" fill="none" stroke="#ffd800" stroke-width="1.1"/><circle cx="869.5" cy="479.5" r="21" fill="url(#bg)" stroke="#ffd800" stroke-width="1.3"/><polygon points="869.5,459.5 886.8,469.5 886.8,489.5 869.5,499.5 852.2,489.5 852.2,469.5" fill="none" stroke="#ffd800" stroke-width="1.1"/><circle cx="602.5" cy="576.5" r="21" fill="url(#bg)" stroke="#ffd800" stroke-width="1.3"/><polygon points="602.5,556.5 619.8,566.5 619.8,586.5 602.5,596.5 585.2,586.5 585.2,566.5" fill="none" stroke="#ffd800" stroke-width="1.1"/><circle cx="675.5" cy="576.5" r="21" fill="url(#bg)" stroke="#ffd800" stroke-width="1.3"/><polygon points="675.5,556.5 692.8,566.5 692.8,586.5 675.5,596.5 658.2,586.5 658.2,566.5" fill="none" stroke="#ffd800" stroke-width="1.1"/><circle cx="796.5" cy="576.5" r="21" fill="url(#bg)" stroke="#ffd800" stroke-width="1.3"/><polygon points="796.5,556.5 813.8,566.5 813.8,586.5 796.5,596.5 779.2,586.5 779.2,566.5" fill="none" stroke="#ffd800" stroke-width="1.1"/><circle cx="869.5" cy="576.5" r="21" fill="url(#bg)" stroke="#ffd800" stroke-width="1.3"/><polygon points="869.5,556.5 886.8,566.5 886.8,586.5 869.5,596.5 852.2,586.5 852.2,566.5" fill="none" stroke="#ffd800" stroke-width="1.1"/><circle cx="602.5" cy="722.5" r="21" fill="url(#bg)" stroke="#ffd800" stroke-width="1.3"/><polygon points="602.5,702.5 619.8,712.5 619.8,732.5 602.5,742.5 585.2,732.5 585.2,712.5" fill="none" stroke="#ffd800" stroke-width="1.1"/><circle cx="675.5" cy="722.5" r="21" fill="url(#bg)" stroke="#ffd800" stroke-width="1.3"/><polygon points="675.5,702.5 692.8,712.5 692.8,732.5 675.5,742.5 658.2,732.5 658.2,712.5" fill="none" stroke="#ffd800" stroke-width="1.1"/><circle cx="796.5" cy="722.5" r="21" fill="url(#bg)" stroke="#ffd800" stroke-width="1.3"/><polygon points="796.5,702.5 813.8,712.5 813.8,732.5 796.5,742.5 779.2,732.5 779.2,712.5" fill="none" stroke="#ffd800" stroke-width="1.1"/><circle cx="869.5" cy="722.5" r="21" fill="url(#bg)" stroke="#ffd800" stroke-width="1.3"/><polygon points="869.5,702.5 886.8,712.5 886.8,732.5 869.5,742.5 852.2,732.5 852.2,712.5" fill="none" stroke="#ffd800" stroke-width="1.1"/><circle cx="602.5" cy="819.5" r="21" fill="url(#bg)" stroke="#ffd800" stroke-width="1.3"/><polygon points="602.5,799.5 619.8,809.5 619.8,829.5 602.5,839.5 585.2,829.5 585.2,809.5" fill="none" stroke="#ffd800" stroke-width="1.1"/><circle cx="675.5" cy="819.5" r="21" fill="url(#bg)" stroke="#ffd800" stroke-width="1.3"/><polygon points="675.5,799.5 692.8,809.5 692.8,829.5 675.5,839.5 658.2,829.5 658.2,809.5" fill="none" stroke="#ffd800" stroke-width="1.1"/><circle cx="796.5" cy="819.5" r="21" fill="url(#bg)" stroke="#ffd800" stroke-width="1.3"/><polygon points="796.5,799.5 813.8,809.5 813.8,829.5 796.5,839.5 779.2,829.5 779.2,809.5" fill="none" stroke="#ffd800" stroke-width="1.1"/><circle cx="869.5" cy="819.5" r="21" fill="url(#bg)" stroke="#ffd800" stroke-width="1.3"/><polygon points="869.5,799.5 886.8,809.5 886.8,829.5 869.5,839.5 852.2,829.5 852.2,809.5" fill="none" stroke="#ffd800" stroke-width="1.1"/><circle cx="602.5" cy="916.5" r="21" fill="url(#bg)" stroke="#ffd800" stroke-width="1.3"/><polygon points="602.5,896.5 619.8,906.5 619.8,926.5 602.5,936.5 585.2,926.5 585.2,906.5" fill="none" stroke="#ffd800" stroke-width="1.1"/><circle cx="675.5" cy="916.5" r="21" fill="url(#bg)" stroke="#ffd800" stroke-width="1.3"/><polygon points="675.5,896.5 692.8,906.5 692.8,926.5 675.5,936.5 658.2,926.5 658.2,906.5" fill="none" stroke="#ffd800" stroke-width="1.1"/><circle cx="796.5" cy="916.5" r="21" fill="url(#bg)" stroke="#ffd800" stroke-width="1.3"/><polygon points="796.5,896.5 813.8,906.5 813.8,926.5 796.5,936.5 779.2,926.5 779.2,906.5" fill="none" stroke="#ffd800" stroke-width="1.1"/><circle cx="869.5" cy="916.5" r="21" fill="url(#bg)" stroke="#ffd800" stroke-width="1.3"/><polygon points="869.5,896.5 886.8,906.5 886.8,926.5 869.5,936.5 852.2,926.5 852.2,906.5" fill="none" stroke="#ffd800" stroke-width="1.1"/><path d="M716.5 624.5L727 613.5V624.5Z" fill="#c98a6c" opacity="0.75"/><path d="M754.5 624.5L744 613.5V624.5Z" fill="#c98a6c" opacity="0.75"/><rect x="726" y="691" width="19" height="8" fill="#c98a6c" opacity="0.6"/><defs><linearGradient id="lg" x1="0" y1="0" x2="0" y2="1"><stop offset="0" stop-color="#d0d0d0"/><stop offset="0.45" stop-color="#b4b4b4"/><stop offset="1" stop-color="#707070"/></linearGradient><linearGradient id="lh" x1="0" y1="0" x2="0" y2="1"><stop offset="0" stop-color="#4a4a4a"/><stop offset="0.3" stop-color="#7a7a7a"/><stop offset="0.35" stop-color="#bdbdbd"/><stop offset="1" stop-color="#a8a8a8"/></linearGradient><radialGradient id="dk" cx="35%" cy="35%" r="70%"><stop offset="0" stop-color="#d8d8d8"/><stop offset="0.5" stop-color="#9a9a9a"/><stop offset="1" stop-color="#555"/></radialGradient></defs><rect x="725.5" y="599.5" width="20" height="76" fill="url(#lg)" stroke="#f4f4f4" stroke-width="1.2"/><rect x="726" y="600" width="19" height="13.5" fill="#b0b0b0"/><line x1="726" y1="613.5" x2="745" y2="613.5" stroke="#f0f0f0" stroke-width="1"/><path d="M716 675.5H755L735.5 699.5Z" fill="url(#lh)" stroke="#f0f0f0" stroke-width="1.1"/><circle cx="735" cy="649" r="9" fill="url(#dk)" stroke="#f0f0f0" stroke-width="1"/><rect x="735" y="566.0" width="35" height="14.5" fill="#8c8c8c" opacity="0.55"/><text x="736.5" y="577.5" font-family="Liberation Sans" font-size="11" fill="#000">20.000</text><rect x="735" y="635.0" width="38" height="14.5" fill="#8c8c8c" opacity="0.55"/><text x="736.5" y="646.5" font-family="Liberation Sans" font-size="11" fill="#000">400.00</text><rect x="735" y="664.0" width="38" height="14.5" fill="#8c8c8c" opacity="0.55"/><text x="736.5" y="675.5" font-family="Liberation Sans" font-size="11" fill="#000">100.00</text><rect x="541" y="632" width="21" height="18" fill="#fff"/><text x="543" y="646" font-family="Liberation Sans" font-size="12" fill="#000">B1</text><rect x="929" y="632" width="21" height="18" fill="#fff"/><text x="931" y="645" font-family="Liberation Sans" font-size="12" fill="#000">B2</text></svg><!-- viewport toolbar -->
<svg class="a" style="left:1076px;top:158px" width="300" height="34" fill="none" stroke="#111" stroke-width="1.2">
 <path d="M5.5 9.5V13M5.5 9.5H9M5.5 9.5L9.5 13.5M18.5 9.5H15M18.5 9.5V13M18.5 9.5L14.5 13.5M5.5 23.5V20M5.5 23.5H9M5.5 23.5L9.5 19.5M18.5 23.5H15M18.5 23.5V20M18.5 23.5L14.5 19.5"/>
 <path d="M38 10.5C33 14 32 24 35 23.5H38.5M34.5 10.5H38V14"/>
 <path d="M42 9C49 8 49.5 17 42 22.5M42 18.5V22.5H46"/>
 <path d="M56 14.6L60 18.9L64 14.6" stroke="#555" stroke-width="1.1"/>
 <path d="M68.5 2V29" stroke="#c8c8c8" stroke-width="1"/>
 <path d="M76.5 8V20.3H88.7M73.7 11.4H86V24" stroke="#c8c8c8" stroke-width="1.1"/>
 <path d="M97 14.6L101 18.9L105 14.6" stroke="#555" stroke-width="1.1"/>
 <path d="M117.5 13H128V23.5H117.5ZM122.5 8H133V18.5M117.5 13L122.5 8M128 13L133 8M128 23.5L133 18.5"/>
 <path d="M122.5 13.5V18.5H126.5M122.5 18.5L119.5 21.5" stroke-width="1"/>
 <rect x="141" y="0" width="32" height="32" fill="#e6e6e6" stroke="none"/>
 <path d="M149 13H160V23.5H149Z" fill="#b4b4b4"/><path d="M149 13L154 8H164.5L160 13Z" fill="#b4b4b4"/><path d="M160 13L164.5 8V18.5L160 23.5Z" fill="#b4b4b4"/>
 <path d="M154 13.5V18.5H158M154 18.5L151 21.5" stroke-width="1"/>
 <path d="M181 13L186 8H197V18.5L192 23.5H181Z" fill="#111"/>
 <path d="M181 13H192V23.5M192 13L197 8" stroke="#fff" stroke-width="0.9"/>
 <path d="M205 2V29" stroke="#c8c8c8" stroke-width="1"/>
 <path d="M214.2 11.4L224 9.5L229.2 10.7V15.4L219.3 21.2L214.2 18.2ZM214.2 11.4L219.3 13L229.2 10.7M219.3 13V21.2" stroke-width="1.4" stroke-linejoin="round"/>
 <path d="M252.4 8V24M255.4 8V24M250 12.5A8 3.2 0 0 0 247 14.5M258 12.5A8 3.2 0 0 1 258 18" stroke="#c8c8c8" stroke-width="1"/><path d="M247.5 17.5L251 15.5V19.5Z" fill="#c8c8c8" stroke="none"/>
 <path d="M278.2 14.6L286.1 9L293.9 14.6M280.3 13.2V22.4H291.7V13.2M284.2 22.4V17.2H287.8V22.4"/>
</svg>
<div class="a" style="left:1109px;top:204px;font-size:12px;line-height:16px;white-space:nowrap;font-weight:bold;color:#f07022;letter-spacing:-0.2px">Production cost</div><div class="a" style="left:1203px;top:204px;font-size:12px;line-height:16px;color:#111">-</div><div class="a" style="left:1212px;top:204px;font-size:12px;line-height:16px;white-space:nowrap;font-weight:bold;color:#111;letter-spacing:-0.3px">539 US$</div>
<!-- nav cube -->
<svg class="a" style="left:1286px;top:220px" width="92" height="50">
 <ellipse cx="44.6" cy="40.6" rx="41" ry="4" fill="none" stroke="#dedede" stroke-width="2.8"/>
 <line x1="2" y1="39.5" x2="11" y2="39.5" stroke="#555" stroke-width="1.1"/>
 <rect x="26.8" y="4.9" width="40.2" height="39.8" fill="#b8b8b8" stroke="#7a7a7a" stroke-width="1.1"/>
 <rect x="31.2" y="9.2" width="31.4" height="31.1" fill="#c4c4c4" stroke="#7a7a7a" stroke-width="1.1"/>
 <path d="M26.8 4.9L31.2 9.2M67 4.9L62.6 9.2M26.8 44.7L31.2 40.3M67 44.7L62.6 40.3" stroke="#7a7a7a" stroke-width="0.9"/>
 <text x="0" y="0" font-family="Liberation Sans" font-size="10" fill="#fff" transform="translate(43,29.8) scale(0.8,1)">-X</text>
 <circle cx="44" cy="44.8" r="1.4" fill="#222"/>
</svg>
<!-- tree -->
<svg class="a" style="left:1228px;top:296px" width="40" height="150" fill="#444">
 <path d="M3 9H9V3Z"/><path d="M23 31H29V25Z"/><path d="M23 97H29V91Z"/><path d="M23 141H29V135Z"/>
</svg>
<div class="a" style="left:1250px;top:294px;font-size:12px;font-weight:bold;color:#333;white-space:nowrap;line-height:15px;letter-spacing:-0.1px">Design of bolted pl...</div>
<div class="a" style="left:1270px;top:316px;font-size:12px;font-weight:bold;color:#333;white-space:nowrap;line-height:15px;letter-spacing:-0.1px">Members</div>
<div class="a" style="left:1270px;top:382px;font-size:12px;font-weight:bold;color:#333;white-space:nowrap;line-height:15px;letter-spacing:-0.1px">Load effects</div>
<div class="a" style="left:1270px;top:426px;font-size:12px;font-weight:bold;color:#333;white-space:nowrap;line-height:15px;letter-spacing:-0.1px">Operations</div>
<svg class="a" style="left:1264px;top:335px" width="115" height="135">
 <rect x="6" y="6.5" width="11" height="10" rx="1.5" fill="#e4e4e4"/><path d="M8.5 11.5L11 15L17.5 5" fill="none" stroke="#f58220" stroke-width="2"/>
 <rect x="6" y="29" width="11" height="10" rx="1.5" fill="#e4e4e4"/><path d="M8.5 34L11 37.5L17.5 27.5" fill="none" stroke="#f58220" stroke-width="2"/>
 <rect x="6" y="72.5" width="11" height="10" rx="1.5" fill="#e4e4e4"/><path d="M8.5 77.5L11 81L17.5 71" fill="none" stroke="#f58220" stroke-width="2"/>
 <path d="M0 110H95L110 120.5L95 131H0Z" fill="#f07022"/>
 <rect x="6" y="116" width="11" height="10" rx="1.5" fill="#eaeaea"/><path d="M8.5 121L11 124.5L17.5 114.5" fill="none" stroke="#f58220" stroke-width="2"/>
</svg>
<div class="a" style="left:1292px;top:340px;font-size:12px;color:#333;line-height:15px">B1</div>
<div class="a" style="left:1292px;top:362px;font-size:12px;color:#333;line-height:15px;text-decoration:underline">B2</div>
<div class="a" style="left:1292px;top:406px;font-size:12px;color:#333;line-height:15px">LE1</div>
<div class="a" style="left:1292px;top:450px;font-size:12px;color:#fff;line-height:15px">PP1</div>
<!-- splitter -->
<div class="a" style="left:1388px;top:158px;width:6px;height:840px;background:#c8c8c8"></div>
<!-- right panel -->
<div class="a" style="left:1394px;top:158px;width:526px;height:25px;background:#f07022"></div>
<div class="a" style="left:1404px;top:164px;color:#fff;font-size:12.5px;line-height:15px;white-space:nowrap;font-weight:bold">PP1</div><div class="a" style="left:1435px;top:164px;color:#fff;font-size:12.5px;line-height:15px;white-space:nowrap;letter-spacing:-0.3px">[Plate to plate]</div>
<div class="a" style="left:1691px;top:164px;color:#fff;font-size:12.5px;line-height:15px;font-weight:bold;white-space:nowrap;letter-spacing:-0.3px">Autodesign</div>
<svg class="a" style="left:1764px;top:168px" width="7" height="5"><path d="M0 0.5H7L3.5 4.5Z" fill="#fff"/></svg>
<div class="a" style="left:1783px;top:164px;color:#fff;font-size:12.5px;line-height:15px;font-weight:bold">Editor</div>
<div class="a" style="left:1835px;top:164px;color:#fff;font-size:12.5px;line-height:15px;font-weight:bold">Copy</div>
<div class="a" style="left:1873px;top:164px;color:#fff;font-size:12.5px;line-height:15px;font-weight:bold">Delete</div>
<svg class="a" style="left:1410px;top:201px" width="12" height="8"><path d="M1.5 1.5L6 6L10.5 1.5" fill="none" stroke="#f07022" stroke-width="1.2"/></svg>
<div class="a" style="left:1428px;top:197px;font-size:12.5px;font-weight:bold;color:#333;line-height:16px;white-space:nowrap;letter-spacing:-0.1px;">Plate to plate</div>
<div class="a" style="left:1428px;top:222px;font-size:12px;color:#333;line-height:16px;white-space:nowrap;letter-spacing:-0.1px;">Member 1</div>
<div class="a" style="left:1551px;top:219px;width:334px;height:20px;border:1px solid #dcdcdc;background:#fff"></div>
<div class="a" style="left:1557px;top:221px;font-size:12px;color:#000;line-height:16px;white-space:nowrap;letter-spacing:-0.1px;">B1</div>
<svg class="a" style="left:1870px;top:226px" width="11" height="7"><path d="M1 1L5.5 5.5L10 1" fill="none" stroke="#333" stroke-width="1.1"/></svg>
<svg class="a" style="left:1893px;top:221px" width="14" height="16"><path d="M2 1.5V13L5 10L7.5 15L9.5 14L7 9H11Z" fill="#fff" stroke="#111" stroke-width="1.1" stroke-linejoin="round"/></svg>
<div class="a" style="left:1428px;top:246px;font-size:12px;color:#333;line-height:16px;white-space:nowrap;letter-spacing:-0.1px;">Member 2</div>
<div class="a" style="left:1551px;top:243px;width:334px;height:20px;border:1px solid #dcdcdc;background:#fff"></div>
<div class="a" style="left:1557px;top:245px;font-size:12px;color:#000;line-height:16px;white-space:nowrap;letter-spacing:-0.1px;">B2</div>
<svg class="a" style="left:1870px;top:250px" width="11" height="7"><path d="M1 1L5.5 5.5L10 1" fill="none" stroke="#333" stroke-width="1.1"/></svg>
<svg class="a" style="left:1893px;top:245px" width="14" height="16"><path d="M2 1.5V13L5 10L7.5 15L9.5 14L7 9H11Z" fill="#fff" stroke="#111" stroke-width="1.1" stroke-linejoin="round"/></svg>
<div class="a" style="left:1428px;top:270px;font-size:12px;color:#333;line-height:16px;white-space:nowrap;letter-spacing:-0.1px;">X - position [in]</div>
<div class="a" style="left:1551px;top:267px;width:358px;height:20px;border:1px solid #dcdcdc;background:#fff"></div>
<div class="a" style="left:1557px;top:269px;font-size:12px;color:#000;line-height:16px;white-space:nowrap;letter-spacing:-0.1px;">0"</div>
<div class="a" style="left:1428px;top:294px;font-size:12px;color:#333;line-height:16px;white-space:nowrap;letter-spacing:-0.1px;">Material</div>
<div class="a" style="left:1551px;top:291px;width:334px;height:20px;border:1px solid #dcdcdc;background:#fff"></div>
<div class="a" style="left:1557px;top:293px;font-size:12px;color:#000;line-height:16px;white-space:nowrap;letter-spacing:-0.1px;">A572 Gr.50</div>
<svg class="a" style="left:1870px;top:298px" width="11" height="7"><path d="M1 1L5.5 5.5L10 1" fill="none" stroke="#333" stroke-width="1.1"/></svg>
<svg class="a" style="left:1892px;top:294px" width="14" height="14"><path d="M7 1.5V12.5M1.5 7H12.5" stroke="#333" stroke-width="1.2"/></svg>
<div class="a" style="left:1428px;top:318px;font-size:12px;color:#333;line-height:16px;white-space:nowrap;letter-spacing:-0.1px;">Thickness [in]</div>
<div class="a" style="left:1551px;top:315px;width:334px;height:20px;border:1px solid #dcdcdc;background:#fff"></div>
<div class="a" style="left:1557px;top:317px;font-size:12px;color:#000;line-height:16px;white-space:nowrap;letter-spacing:-0.1px;">1"</div>
<svg class="a" style="left:1870px;top:317px" width="10" height="16"><path d="M1.5 5.5L5 2L8.5 5.5M1.5 10.5L5 14L8.5 10.5" fill="none" stroke="#555" stroke-width="1"/></svg>
<svg class="a" style="left:1889px;top:318px" width="19" height="14"><path d="M2 4.5H18M5.5 1L2 4.5L5.5 8M1 9.5H17M13.5 6L17 9.5L13.5 13" fill="none" stroke="#222" stroke-width="1.2"/></svg>
<div class="a" style="left:1428px;top:342px;font-size:12px;color:#333;line-height:16px;white-space:nowrap;letter-spacing:-0.1px;">Connection type</div>
<div class="a" style="left:1551px;top:339px;width:358px;height:20px;border:1px solid #dcdcdc;background:#fff"></div>
<div class="a" style="left:1557px;top:341px;font-size:12px;color:#000;line-height:16px;white-space:nowrap;letter-spacing:-0.1px;">Bolted</div>
<svg class="a" style="left:1894px;top:346px" width="11" height="7"><path d="M1 1L5.5 5.5L10 1" fill="none" stroke="#333" stroke-width="1.1"/></svg>
<div class="a" style="left:1428px;top:366px;font-size:12px;color:#333;line-height:16px;white-space:nowrap;letter-spacing:-0.1px;">Dimensions</div>
<div class="a" style="left:1551px;top:363px;width:358px;height:20px;border:1px solid #dcdcdc;background:#fff"></div>
<div class="a" style="left:1557px;top:365px;font-size:12px;color:#000;line-height:16px;white-space:nowrap;letter-spacing:-0.1px;">To profile symmetrical</div>
<svg class="a" style="left:1894px;top:370px" width="11" height="7"><path d="M1 1L5.5 5.5L10 1" fill="none" stroke="#333" stroke-width="1.1"/></svg>
<div class="a" style="left:1428px;top:390px;font-size:12px;color:#333;line-height:16px;white-space:nowrap;letter-spacing:-0.1px;">Top [in]</div>
<div class="a" style="left:1551px;top:387px;width:358px;height:20px;border:1px solid #dcdcdc;background:#fff"></div>
<div class="a" style="left:1557px;top:389px;font-size:12px;color:#000;line-height:16px;white-space:nowrap;letter-spacing:-0.1px;">0"</div>
<div class="a" style="left:1428px;top:414px;font-size:12px;color:#333;line-height:16px;white-space:nowrap;letter-spacing:-0.1px;">Left [in]</div>
<div class="a" style="left:1551px;top:411px;width:358px;height:20px;border:1px solid #dcdcdc;background:#fff"></div>
<div class="a" style="left:1557px;top:413px;font-size:12px;color:#000;line-height:16px;white-space:nowrap;letter-spacing:-0.1px;">0"</div>
<svg class="a" style="left:1410px;top:453px" width="12" height="8"><path d="M1.5 1.5L6 6L10.5 1.5" fill="none" stroke="#f07022" stroke-width="1.2"/></svg>
<div class="a" style="left:1428px;top:449px;font-size:12.5px;font-weight:bold;color:#333;line-height:16px;white-space:nowrap;letter-spacing:-0.1px;">Bolts</div>
<div class="a" style="left:1428px;top:474px;font-size:12px;color:#333;line-height:16px;white-space:nowrap;letter-spacing:-0.1px;">Type</div>
<div class="a" style="left:1551px;top:471px;width:334px;height:20px;border:1px solid #dcdcdc;background:#fff"></div>
<div class="a" style="left:1557px;top:473px;font-size:12px;color:#000;line-height:16px;white-space:nowrap;letter-spacing:-0.1px;">7/8 A325</div>
<svg class="a" style="left:1870px;top:478px" width="11" height="7"><path d="M1 1L5.5 5.5L10 1" fill="none" stroke="#333" stroke-width="1.1"/></svg>
<svg class="a" style="left:1892px;top:474px" width="14" height="14"><path d="M7 1.5V12.5M1.5 7H12.5" stroke="#333" stroke-width="1.2"/></svg>
<div class="a" style="left:1428px;top:498px;font-size:12px;color:#333;line-height:16px;white-space:nowrap;letter-spacing:-0.1px;">Top layers [in]</div>
<div class="a" style="left:1551px;top:495px;width:358px;height:20px;border:1px solid #dcdcdc;background:#fff"></div>
<div class="a" style="left:1557px;top:497px;font-size:12px;color:#000;line-height:16px;white-space:nowrap;letter-spacing:-0.1px;">-3" -4"*2</div>
<div class="a" style="left:1428px;top:522px;font-size:12px;color:#333;line-height:16px;white-space:nowrap;letter-spacing:-0.1px;">Left layers [in]</div>
<div class="a" style="left:1551px;top:519px;width:358px;height:20px;border:1px solid #dcdcdc;background:#fff"></div>
<div class="a" style="left:1557px;top:521px;font-size:12px;color:#000;line-height:16px;white-space:nowrap;letter-spacing:-0.1px;">-2"1/2 -3"</div>
<div class="a" style="left:1428px;top:546px;font-size:12px;color:#333;line-height:16px;white-space:nowrap;letter-spacing:-0.1px;">Shear plane in thread</div>
<div class="a" style="left:1551px;top:547px;width:12px;height:12px;border:1px solid #ddd;background:#fff"></div>
<svg class="a" style="left:1552px;top:548px" width="10" height="10"><path d="M2 5.5L4 7.5L8.5 2.5" fill="none" stroke="#f07022" stroke-width="1.3"/></svg>
<div class="a" style="left:1428px;top:570px;font-size:12px;color:#333;line-height:16px;white-space:nowrap;letter-spacing:-0.1px;">Shear force transfer</div>
<div class="a" style="left:1551px;top:567px;width:358px;height:20px;border:1px solid #dcdcdc;background:#fff"></div>
<div class="a" style="left:1557px;top:569px;font-size:12px;color:#000;line-height:16px;white-space:nowrap;letter-spacing:-0.1px;">Bearing - tension/shear interaction</div>
<svg class="a" style="left:1894px;top:574px" width="11" height="7"><path d="M1 1L5.5 5.5L10 1" fill="none" stroke="#333" stroke-width="1.1"/></svg>
<svg class="a" style="left:1410px;top:609px" width="12" height="8"><path d="M1.5 1.5L6 6L10.5 1.5" fill="none" stroke="#f07022" stroke-width="1.2"/></svg>
<div class="a" style="left:1428px;top:605px;font-size:12.5px;font-weight:bold;color:#333;line-height:16px;white-space:nowrap;letter-spacing:-0.1px;">Welds</div>
<div class="a" style="left:1428px;top:630px;font-size:12px;color:#333;line-height:16px;white-space:nowrap;letter-spacing:-0.1px;">Flanges [in]</div>
<div class="a" style="left:1551px;top:627px;width:53px;height:20px;border:1px solid #dcdcdc"></div>
<div class="a" style="left:1556px;top:629px;font-size:12px;line-height:16px">5/16</div>
<svg class="a" style="left:1587px;top:629px" width="10" height="16"><path d="M1.5 5.5L5 2L8.5 5.5M1.5 10.5L5 14L8.5 10.5" fill="none" stroke="#555" stroke-width="1"/></svg>
<div class="a" style="left:1608px;top:627px;width:39px;height:20px;border:1px solid #dcdcdc"></div>
<svg class="a" style="left:1610px;top:628px" width="18" height="18"><path d="M2 15.5H16M7 15.5V2.5H11V15.5" fill="none" stroke="#222" stroke-width="1"/><path d="M7 14H11" stroke="#f07022" stroke-width="2"/></svg>
<svg class="a" style="left:1633px;top:634px" width="11" height="7"><path d="M1 1L5.5 5.5L10 1" fill="none" stroke="#333" stroke-width="1.1"/></svg>
<div class="a" style="left:1652px;top:627px;width:233px;height:20px;border:1px solid #dcdcdc"></div>
<div class="a" style="left:1657px;top:629px;font-size:12px;line-height:16px">E70xx</div>
<svg class="a" style="left:1870px;top:634px" width="11" height="7"><path d="M1 1L5.5 5.5L10 1" fill="none" stroke="#333" stroke-width="1.1"/></svg>
<svg class="a" style="left:1892px;top:630px" width="14" height="14"><path d="M7 1.5V12.5M1.5 7H12.5" stroke="#333" stroke-width="1.2"/></svg>
<div class="a" style="left:1428px;top:654px;font-size:12px;color:#333;line-height:16px;white-space:nowrap;letter-spacing:-0.1px;">Webs [in]</div>
<div class="a" style="left:1551px;top:651px;width:53px;height:20px;border:1px solid #dcdcdc"></div>
<div class="a" style="left:1556px;top:653px;font-size:12px;line-height:16px">5/16</div>
<svg class="a" style="left:1587px;top:653px" width="10" height="16"><path d="M1.5 5.5L5 2L8.5 5.5M1.5 10.5L5 14L8.5 10.5" fill="none" stroke="#555" stroke-width="1"/></svg>
<div class="a" style="left:1608px;top:651px;width:39px;height:20px;border:1px solid #dcdcdc"></div>
<svg class="a" style="left:1610px;top:652px" width="18" height="18"><path d="M2 15L7.5 8V1.5M16 15L10.5 8V1.5M7.5 15V8M10.5 15V8" fill="none" stroke="#222" stroke-width="1"/><path d="M2 16H16" stroke="#f07022" stroke-width="2"/></svg>
<svg class="a" style="left:1633px;top:658px" width="11" height="7"><path d="M1 1L5.5 5.5L10 1" fill="none" stroke="#333" stroke-width="1.1"/></svg>
<div class="a" style="left:1652px;top:651px;width:233px;height:20px;border:1px solid #dcdcdc"></div>
<div class="a" style="left:1657px;top:653px;font-size:12px;line-height:16px">E70xx</div>
<svg class="a" style="left:1870px;top:658px" width="11" height="7"><path d="M1 1L5.5 5.5L10 1" fill="none" stroke="#333" stroke-width="1.1"/></svg>
<svg class="a" style="left:1892px;top:654px" width="14" height="14"><path d="M7 1.5V12.5M1.5 7H12.5" stroke="#333" stroke-width="1.2"/></svg>
<div class="a" style="left:1397px;top:185px;width:391px;height:504px;border:4.5px solid #ff4040;border-radius:15px"></div>
<!-- FOOTER -->
<div class="a" style="left:0;top:998px;width:1920px;height:1px;background:#bbb"></div>
<div class="a" style="left:0;top:999px;width:1920px;height:33px;overflow:hidden"><svg class="a" style="left:0;top:0" width="1920" height="33"><rect width="1920" height="33" fill="#161616"/><linearGradient id="f0"><stop offset="0.00" stop-opacity="0.21" stop-color="rgb(43,43,43)"/><stop offset="0.25" stop-opacity="0.21" stop-color="rgb(43,43,43)"/><stop offset="0.50" stop-opacity="0.41" stop-color="rgb(43,43,43)"/><stop offset="0.75" stop-opacity="0.27" stop-color="rgb(43,43,43)"/><stop offset="1.00" stop-opacity="0.21" stop-color="rgb(43,43,43)"/></linearGradient><rect y="0" width="1920" height="1" fill="url(#f0)"/><linearGradient id="f10"><stop offset="0.00" stop-opacity="0.78" stop-color="rgb(39,39,39)"/><stop offset="0.33" stop-opacity="0.92" stop-color="rgb(39,39,39)"/><stop offset="0.67" stop-opacity="0.78" stop-color="rgb(39,39,39)"/><stop offset="1.00" stop-opacity="0.75" stop-color="rgb(39,39,39)"/></linearGradient><rect y="1" width="1920" height="2" fill="url(#f10)"/><linearGradient id="f30"><stop offset="0.00" stop-opacity="0.73" stop-color="rgb(27,27,27)"/><stop offset="0.50" stop-opacity="0.92" stop-color="rgb(27,27,27)"/><stop offset="1.00" stop-opacity="0.89" stop-color="rgb(27,27,27)"/></linearGradient><rect y="3" width="1920" height="1" fill="url(#f30)"/><linearGradient id="f40"><stop offset="0.00" stop-opacity="0.88" stop-color="rgb(55,55,55)"/><stop offset="0.50" stop-opacity="0.64" stop-color="rgb(55,55,55)"/><stop offset="1.00" stop-opacity="0.68" stop-color="rgb(55,55,55)"/></linearGradient><rect y="4" width="1920" height="2" fill="url(#f40)"/><linearGradient id="f60"><stop offset="0.00" stop-opacity="0.16" stop-color="rgb(29,29,29)"/><stop offset="0.25" stop-opacity="0.21" stop-color="rgb(29,29,29)"/><stop offset="0.50" stop-opacity="0.23" stop-color="rgb(29,29,29)"/><stop offset="0.75" stop-opacity="0.25" stop-color="rgb(29,29,29)"/><stop offset="1.00" stop-opacity="0.37" stop-color="rgb(29,29,29)"/></linearGradient><rect y="6" width="1920" height="2" fill="url(#f60)"/><linearGradient id="f80"><stop offset="0.00" stop-opacity="0.48" stop-color="rgb(51,51,51)"/><stop offset="0.33" stop-opacity="0.77" stop-color="rgb(51,51,51)"/><stop offset="0.67" stop-opacity="0.64" stop-color="rgb(51,51,51)"/><stop offset="1.00" stop-opacity="0.52" stop-color="rgb(51,51,51)"/></linearGradient><rect y="8" width="1920" height="2" fill="url(#f80)"/><linearGradient id="f100"><stop offset="0.00" stop-opacity="0.79" stop-color="rgb(10,10,10)"/><stop offset="0.25" stop-opacity="0.18" stop-color="rgb(10,10,10)"/><stop offset="0.50" stop-opacity="0.66" stop-color="rgb(10,10,10)"/><stop offset="0.75" stop-opacity="0.56" stop-color="rgb(10,10,10)"/><stop offset="1.00" stop-opacity="0.35" stop-color="rgb(10,10,10)"/></linearGradient><rect y="10" width="1920" height="2" fill="url(#f100)"/><linearGradient id="f120"><stop offset="0.00" stop-opacity="0.81" stop-color="rgb(12,12,12)"/><stop offset="0.33" stop-opacity="0.71" stop-color="rgb(12,12,12)"/><stop offset="0.67" stop-opacity="0.56" stop-color="rgb(12,12,12)"/><stop offset="1.00" stop-opacity="0.91" stop-color="rgb(12,12,12)"/></linearGradient><rect y="12" width="1920" height="3" fill="url(#f120)"/><linearGradient id="f150"><stop offset="0.00" stop-opacity="0.73" stop-color="rgb(24,24,24)"/><stop offset="0.50" stop-opacity="0.32" stop-color="rgb(24,24,24)"/><stop offset="1.00" stop-opacity="0.29" stop-color="rgb(24,24,24)"/></linearGradient><rect y="15" width="1920" height="1" fill="url(#f150)"/><linearGradient id="f160"><stop offset="0.00" stop-opacity="0.57" stop-color="rgb(47,47,47)"/><stop offset="0.33" stop-opacity="0.36" stop-color="rgb(47,47,47)"/><stop offset="0.67" stop-opacity="0.49" stop-color="rgb(47,47,47)"/><stop offset="1.00" stop-opacity="0.36" stop-color="rgb(47,47,47)"/></linearGradient><rect y="16" width="1920" height="1" fill="url(#f160)"/><linearGradient id="f170"><stop offset="0.00" stop-opacity="0.90" stop-color="rgb(32,32,32)"/><stop offset="0.50" stop-opacity="0.48" stop-color="rgb(32,32,32)"/><stop offset="1.00" stop-opacity="0.65" stop-color="rgb(32,32,32)"/></linearGradient><rect y="17" width="1920" height="3" fill="url(#f170)"/><linearGradient id="f200"><stop offset="0.00" stop-opacity="0.26" stop-color="rgb(18,18,18)"/><stop offset="0.50" stop-opacity="0.45" stop-color="rgb(18,18,18)"/><stop offset="1.00" stop-opacity="0.91" stop-color="rgb(18,18,18)"/></linearGradient><rect y="20" width="1920" height="1" fill="url(#f200)"/><linearGradient id="f210"><stop offset="0.00" stop-opacity="0.96" stop-color="rgb(50,50,50)"/><stop offset="0.50" stop-opacity="0.39" stop-color="rgb(50,50,50)"/><stop offset="1.00" stop-opacity="0.29" stop-color="rgb(50,50,50)"/></linearGradient><rect y="21" width="1920" height="1" fill="url(#f210)"/><linearGradient id="f220"><stop offset="0.00" stop-opacity="0.94" stop-color="rgb(35,35,35)"/><stop offset="0.33" stop-opacity="0.86" stop-color="rgb(35,35,35)"/><stop offset="0.67" stop-opacity="0.48" stop-color="rgb(35,35,35)"/><stop offset="1.00" stop-opacity="0.59" stop-color="rgb(35,35,35)"/></linearGradient><rect y="22" width="1920" height="2" fill="url(#f220)"/><linearGradient id="f240"><stop offset="0.00" stop-opacity="0.86" stop-color="rgb(25,25,25)"/><stop offset="0.25" stop-opacity="0.98" stop-color="rgb(25,25,25)"/><stop offset="0.50" stop-opacity="0.53" stop-color="rgb(25,25,25)"/><stop offset="0.75" stop-opacity="0.21" stop-color="rgb(25,25,25)"/><stop offset="1.00" stop-opacity="0.18" stop-color="rgb(25,25,25)"/></linearGradient><rect y="24" width="1920" height="3" fill="url(#f240)"/><linearGradient id="f270"><stop offset="0.00" stop-opacity="0.75" stop-color="rgb(7,7,7)"/><stop offset="0.25" stop-opacity="0.63" stop-color="rgb(7,7,7)"/><stop offset="0.50" stop-opacity="0.41" stop-color="rgb(7,7,7)"/><stop offset="0.75" stop-opacity="0.82" stop-color="rgb(7,7,7)"/><stop offset="1.00" stop-opacity="0.17" stop-color="rgb(7,7,7)"/></linearGradient><rect y="27" width="1920" height="2" fill="url(#f270)"/><linearGradient id="f290"><stop offset="0.00" stop-opacity="0.31" stop-color="rgb(30,30,30)"/><stop offset="0.33" stop-opacity="0.80" stop-color="rgb(30,30,30)"/><stop offset="0.67" stop-opacity="0.38" stop-color="rgb(30,30,30)"/><stop offset="1.00" stop-opacity="0.81" stop-color="rgb(30,30,30)"/></linearGradient><rect y="29" width="1920" height="1" fill="url(#f290)"/><linearGradient id="f300"><stop offset="0.00" stop-opacity="0.53" stop-color="rgb(45,45,45)"/><stop offset="0.50" stop-opacity="0.69" stop-color="rgb(45,45,45)"/><stop offset="1.00" stop-opacity="0.71" stop-color="rgb(45,45,45)"/></linearGradient><rect y="30" width="1920" height="1" fill="url(#f300)"/><linearGradient id="f310"><stop offset="0.00" stop-opacity="0.32" stop-color="rgb(9,9,9)"/><stop offset="0.25" stop-opacity="0.85" stop-color="rgb(9,9,9)"/><stop offset="0.50" stop-opacity="0.37" stop-color="rgb(9,9,9)"/><stop offset="0.75" stop-opacity="0.76" stop-color="rgb(9,9,9)"/><stop offset="1.00" stop-opacity="0.79" stop-color="rgb(9,9,9)"/></linearGradient><rect y="31" width="1920" height="1" fill="url(#f310)"/><linearGradient id="f320"><stop offset="0.00" stop-opacity="0.30" stop-color="rgb(50,50,50)"/><stop offset="0.50" stop-opacity="0.38" stop-color="rgb(50,50,50)"/><stop offset="1.00" stop-opacity="0.44" stop-color="rgb(50,50,50)"/></linearGradient><rect y="32" width="1920" height="2" fill="url(#f320)"/></svg></div>
<div class="a" style="left:23px;top:1011px;font-size:12px;line-height:15px;white-space:nowrap;color:#9a9a9a">Design code:</div>
<div class="a" style="left:99px;top:1011px;font-size:12px;line-height:15px;white-space:nowrap;color:#fff;font-weight:bold;letter-spacing:-0.2px">AISC - LRFD (2022)</div>
<div class="a" style="left:224px;top:1011px;font-size:12px;line-height:15px;white-space:nowrap;color:#9a9a9a">Analysis:</div>
<div class="a" style="left:275px;top:1011px;font-size:12px;line-height:15px;white-space:nowrap;color:#fff;font-weight:bold;letter-spacing:-0.4px">Stress, strain</div>
<div class="a" style="left:366px;top:1011px;font-size:12px;line-height:15px;white-space:nowrap;color:#9a9a9a">Load effects:</div>
<div class="a" style="left:443px;top:1011px;font-size:12px;line-height:15px;white-space:nowrap;color:#fff;font-weight:bold;letter-spacing:-0.4px">In equilibrium</div>
<div class="a" style="left:540px;top:1011px;font-size:12px;line-height:15px;white-space:nowrap;color:#9a9a9a">Units:</div>
<div class="a" style="left:579px;top:1011px;font-size:12px;line-height:15px;white-space:nowrap;color:#fff;font-weight:bold">in</div>
<div class="a" style="left:1797px;top:1011px;font-size:12px;line-height:15px;white-space:nowrap"><span style="color:#f07022">www.</span><span style="color:#fff">ideastatica</span><span style="color:#f07022">.com</span></div>
</body></html>
